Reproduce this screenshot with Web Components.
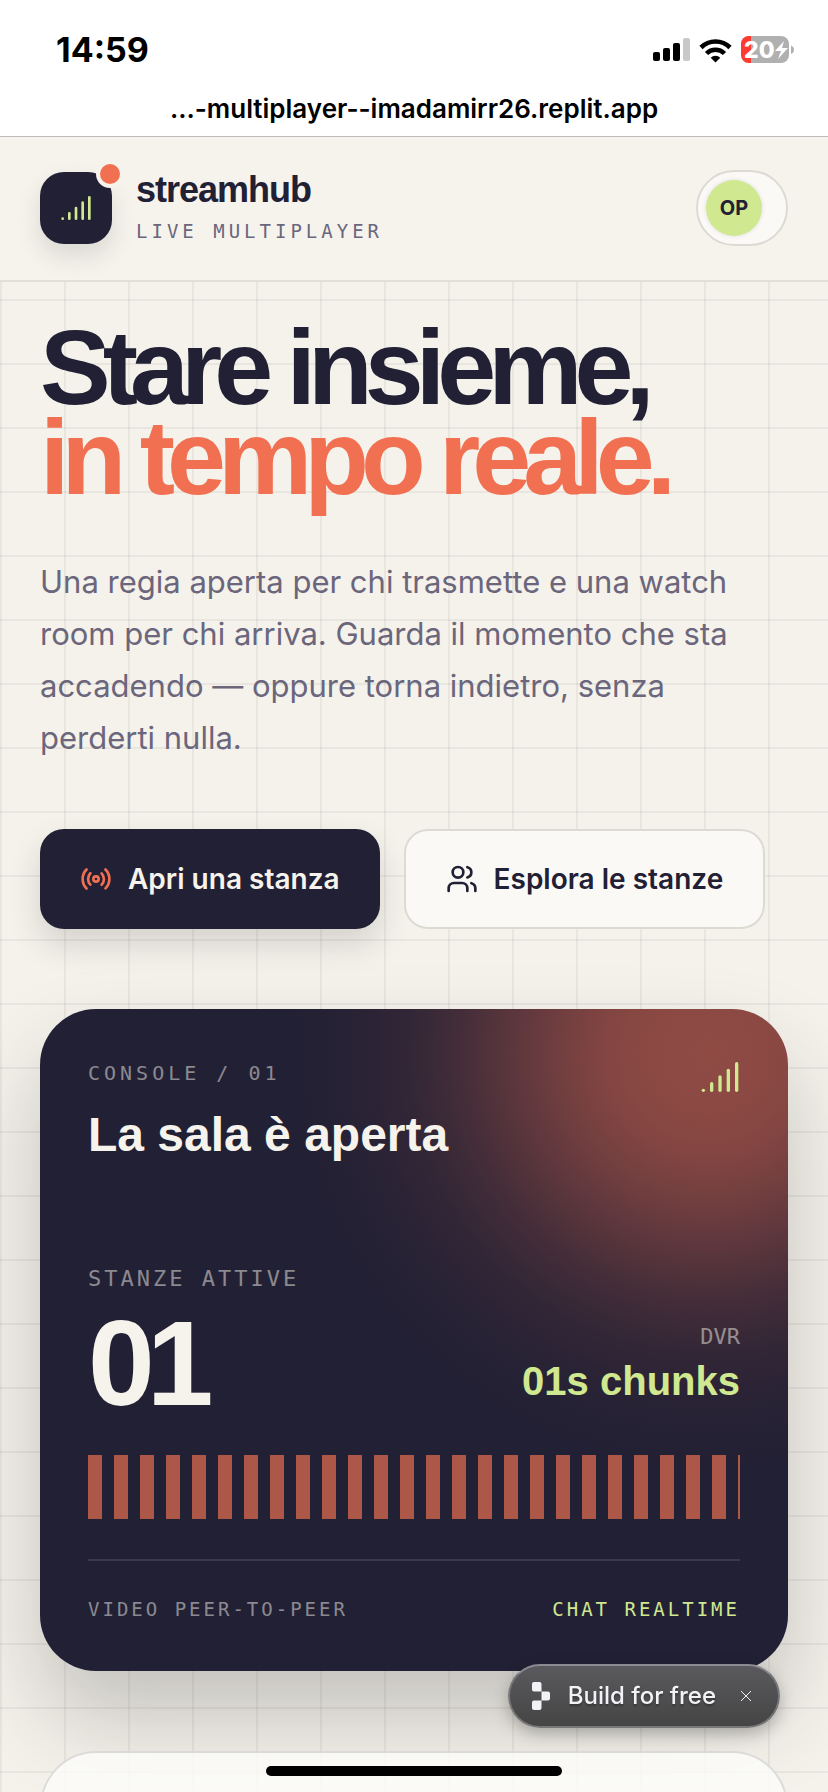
<!DOCTYPE html>
<html lang="it">
<head>
<meta charset="utf-8">
<meta name="viewport" content="width=device-width, initial-scale=1">
<title>streamhub</title>
<style>
  :root {
    --ink: #222034;
    --paper: #f5f2eb;
    --coral: #f27052;
    --lime: #d0e88f;
    --muted: #6b667c;
    --line: #dddad4;
    --display: "Liberation Sans", Arial, sans-serif;
    --body: Inter, sans-serif;
    --mono: "DejaVu Sans Mono", monospace;
  }

  body {
    margin: 0;
    height: 100vh;
    overflow: hidden;
    display: flex;
    flex-direction: column;
    background: var(--paper);
    color: var(--ink);
    font-family: var(--body);
  }
</style>
</head>
<body>
  <phone-chrome time="14:59" battery="20">...-multiplayer--imadamirr26.replit.app</phone-chrome>
  <app-header initials="OP">
    streamhub
    <span slot="tagline">LIVE MULTIPLAYER</span>
  </app-header>
  <grid-page>
    <hero-intro>
      <span slot="first">Stare insieme,</span>
      <span slot="second">in tempo reale.</span>
      <span slot="text">Una regia aperta per chi trasmette e una watch room per chi arriva. Guarda il momento che sta accadendo — oppure torna indietro, senza perderti nulla.</span>
      <action-button slot="actions" icon="radio" variant="solid">Apri una stanza</action-button>
      <action-button slot="actions" icon="users">Esplora le stanze</action-button>
    </hero-intro>
    <room-console>
      <span slot="label">CONSOLE / 01</span>
      <span slot="title">La sala è aperta</span>
      <span slot="rooms-label">STANZE ATTIVE</span>
      <span slot="rooms">01</span>
      <span slot="dvr-label">DVR</span>
      <span slot="dvr">01s chunks</span>
      <span slot="video">VIDEO PEER-TO-PEER</span>
      <span slot="chat">CHAT REALTIME</span>
    </room-console>
    <blank-card></blank-card>
  </grid-page>
  <build-badge>Build for free</build-badge>
  <home-indicator></home-indicator>

<script>
const ICONS = {
  signal: `
    <path d="M2 20h.01"/>
    <path d="M7 20v-4"/>
    <path d="M12 20v-8"/>
    <path d="M17 20V8"/>
    <path d="M22 4v16"/>
  `,
  radio: `
    <path d="M4.9 19.1C1 15.2 1 8.8 4.9 4.9"/>
    <path d="M7.8 16.2c-2.3-2.3-2.3-6.1 0-8.5"/>
    <circle cx="12" cy="12" r="2"/>
    <path d="M16.2 7.8c2.3 2.3 2.3 6.1 0 8.5"/>
    <path d="M19.1 4.9C23 8.8 23 15.1 19.1 19"/>
  `,
  users: `
    <path d="M16 21v-2a4 4 0 0 0-4-4H6a4 4 0 0 0-4 4v2"/>
    <circle cx="9" cy="7" r="4"/>
    <path d="M22 21v-2a4 4 0 0 0-3-3.87"/>
    <path d="M16 3.13a4 4 0 0 1 0 7.75"/>
  `
};

class LineIcon extends HTMLElement {
  constructor() {
    super();
    this.attachShadow({ mode: "open" });
  }

  connectedCallback() {
    this.shadowRoot.innerHTML = `
      <style>
        :host {
          display: block;
          flex: none;
          width: 32px;
          height: 32px;
        }

        svg {
          display: block;
          width: 100%;
          height: 100%;
          fill: none;
          stroke: currentColor;
          stroke-width: 2;
          stroke-linecap: round;
          stroke-linejoin: round;
        }
      </style>
      <svg viewBox="0 0 24 24" aria-hidden="true">${ICONS[this.getAttribute("name")]}</svg>
    `;
  }
}

class PhoneChrome extends HTMLElement {
  constructor() {
    super();
    this.attachShadow({ mode: "open" });
  }

  connectedCallback() {
    this.shadowRoot.innerHTML = `
      <style>
        :host {
          display: block;
          flex: none;
          background: #fff;
          border-bottom: 1px solid #bcbcbc;
          color: #000;
        }

        #status {
          display: flex;
          align-items: center;
          justify-content: space-between;
          height: 28px;
          padding: 36px 33px 20px 56px;
        }

        #time {
          font-size: 34px;
          font-weight: 700;
          line-height: 28px;
        }

        #icons {
          display: flex;
          align-items: center;
          gap: 9px;
        }

        #icons svg {
          display: block;
        }

        #battery text {
          font: 800 23px Inter, sans-serif;
          fill: #fff;
        }

        #url {
          font-size: 26px;
          font-weight: 600;
          line-height: 32px;
          padding: 9px 24px 11px;
          text-align: center;
        }
      </style>
      <div id="status">
        <span id="time">${this.getAttribute("time")}</span>
        <div id="icons">
          <svg width="37" height="24" viewBox="0 0 37 24" aria-hidden="true">
            <rect y="14" width="7" height="9" rx="2"/>
            <rect x="10" y="10" width="7" height="13" rx="2"/>
            <rect x="20" y="5" width="7" height="18" rx="2"/>
            <rect x="30" width="7" height="23" rx="2" fill="#c8c8c8"/>
          </svg>
          <svg width="33" height="25" viewBox="0 0 33 25" aria-hidden="true">
            <path d="M2 9.500a20.500 20.500 0 0 1 29 0M7.500 15.500a12.700 12.700 0 0 1 18 0" fill="none" stroke="#000" stroke-width="4.600"/>
            <path d="M16.500 24.500l-4.800-4.800a6.800 6.800 0 0 1 9.600 0z"/>
          </svg>
          <svg id="battery" width="54" height="28" viewBox="0 0 54 28" aria-hidden="true">
            <clipPath id="shell"><rect width="48" height="27" rx="8"/></clipPath>
            <g clip-path="url(#shell)">
              <rect width="48" height="27" fill="#b0b0b0"/>
              <rect width="10" height="27" fill="#ff3b30"/>
            </g>
            <path d="M50 9.500c4 1.500 4 7 0 8.500z" fill="#b0b0b0"/>
            <text x="3" y="22">${this.getAttribute("battery")}</text>
            <path d="M43 5L34 15h6l-3 8 10-11h-6z" fill="#fff"/>
          </svg>
        </div>
      </div>
      <div id="url"><slot></slot></div>
    `;
  }
}

class AppHeader extends HTMLElement {
  constructor() {
    super();
    this.attachShadow({ mode: "open" });
  }

  connectedCallback() {
    this.shadowRoot.innerHTML = `
      <style>
        :host {
          display: block;
          flex: none;
          background: #f6f3ec;
          border-bottom: 2px solid #e2dfd8;
        }

        header {
          display: flex;
          align-items: center;
          gap: 24px;
          padding: 33px 40px 34px;
        }

        #logo {
          position: relative;
          display: flex;
          align-items: center;
          justify-content: center;
          width: 72px;
          height: 72px;
          border-radius: 24px;
          background: var(--ink);
          color: var(--lime);
          box-shadow: 0 12px 24px rgba(34, 34, 40, 0.12);
        }

        #logo::after {
          content: "";
          position: absolute;
          top: -12px;
          right: -12px;
          width: 20px;
          height: 20px;
          border: 4px solid #f6f3ec;
          border-radius: 50%;
          background: var(--coral);
        }

        #name {
          flex: 1;
        }

        #brand {
          font: 700 36px/38px var(--display);
          letter-spacing: -1px;
        }

        #tagline {
          margin-top: 8px;
          color: var(--muted);
          font: 19px/28px var(--mono);
          letter-spacing: 4px;
        }

        button {
          box-sizing: border-box;
          width: 92px;
          height: 76px;
          padding: 0 8px;
          border: 2px solid var(--line);
          border-radius: 38px;
          background: #faf9f6;
          color: var(--ink);
        }

        #avatar {
          display: flex;
          align-items: center;
          justify-content: center;
          width: 56px;
          height: 56px;
          border-radius: 50%;
          background: var(--lime);
          box-shadow: 0 0 4px rgba(34, 32, 52, 0.12);
          font: 700 20px/24px var(--body);
        }
      </style>
      <header>
        <div id="logo"><line-icon name="signal"></line-icon></div>
        <div id="name">
          <div id="brand"><slot></slot></div>
          <div id="tagline"><slot name="tagline"></slot></div>
        </div>
        <button type="button"><span id="avatar">${this.getAttribute("initials")}</span></button>
      </header>
    `;
  }
}

class GridPage extends HTMLElement {
  constructor() {
    super();
    this.attachShadow({ mode: "open" });
    this.shadowRoot.innerHTML = `
      <style>
        :host {
          display: block;
          flex: 1;
          min-height: 0;
          overflow: hidden;
          background:
            linear-gradient(rgba(34, 32, 52, 0.06) 2px, transparent 2px) 0 17px / 64px 64px,
            linear-gradient(90deg, rgba(34, 32, 52, 0.06) 2px, transparent 2px) 0 0 / 64px 64px,
            var(--paper);
        }

        main {
          display: flex;
          flex-direction: column;
          padding: 40px 40px 0;
        }
      </style>
      <main><slot></slot></main>
    `;
  }
}

class HeroIntro extends HTMLElement {
  constructor() {
    super();
    this.attachShadow({ mode: "open" });
    this.shadowRoot.innerHTML = `
      <style>
        :host {
          display: block;
        }

        h1 {
          margin: 0;
          font: 700 106px/90px var(--display);
          letter-spacing: -8px;
        }

        h1 span {
          display: block;
        }

        #second {
          color: var(--coral);
        }

        p {
          max-width: 720px;
          margin: 54px 0 0;
          color: var(--muted);
          font-size: 31px;
          line-height: 52px;
        }

        #actions {
          display: flex;
          gap: 24px;
          margin-top: 65px;
        }
      </style>
      <h1>
        <span><slot name="first"></slot></span>
        <span id="second"><slot name="second"></slot></span>
      </h1>
      <p><slot name="text"></slot></p>
      <div id="actions"><slot name="actions"></slot></div>
    `;
  }
}

class ActionButton extends HTMLElement {
  constructor() {
    super();
    this.attachShadow({ mode: "open" });
  }

  connectedCallback() {
    this.shadowRoot.innerHTML = `
      <style>
        :host {
          display: block;
        }

        button {
          display: flex;
          align-items: center;
          gap: 16px;
          height: 100px;
          padding: 0 40px;
          border: 2px solid var(--line);
          border-radius: 24px;
          background: #faf9f6;
          color: var(--ink);
          font: 600 28px/36px var(--body);
          white-space: nowrap;
        }

        :host([variant="solid"]) button {
          border: 0;
          background: var(--ink);
          color: #f6f3ec;
          box-shadow: 0 16px 32px rgba(34, 34, 40, 0.15);
        }

        :host([variant="solid"]) line-icon {
          color: var(--coral);
        }
      </style>
      <button type="button">
        <line-icon name="${this.getAttribute("icon")}"></line-icon>
        <slot></slot>
      </button>
    `;
  }
}

class RoomConsole extends HTMLElement {
  constructor() {
    super();
    this.attachShadow({ mode: "open" });
    this.shadowRoot.innerHTML = `
      <style>
        :host {
          display: block;
          margin-top: 80px;
          padding: 48px;
          border-radius: 56px;
          background:
            radial-gradient(
              circle at calc(100% - 80px) 44px,
              rgba(242, 112, 82, 0.52) 0,
              rgba(242, 112, 82, 0.51) 60px,
              rgba(242, 112, 82, 0.47) 100px,
              rgba(242, 112, 82, 0.38) 150px,
              rgba(242, 112, 82, 0.27) 200px,
              rgba(242, 112, 82, 0.16) 250px,
              rgba(242, 112, 82, 0.08) 300px,
              rgba(242, 112, 82, 0.03) 350px,
              rgba(242, 112, 82, 0) 420px
            ),
            var(--ink);
          box-shadow: 0 48px 90px rgba(34, 34, 40, 0.23);
          color: #f6f3ec;
        }

        #top,
        #numbers,
        footer {
          display: flex;
          justify-content: space-between;
        }

        .label {
          color: rgba(246, 243, 236, 0.5);
          font: 20px/32px var(--mono);
          letter-spacing: 4px;
        }

        h2 {
          margin: 18px 0 0;
          font: 700 48px/56px var(--display);
        }

        line-icon {
          width: 40px;
          height: 40px;
          color: var(--lime);
        }

        #numbers {
          align-items: flex-end;
          margin-top: 100px;
        }

        #numbers .label {
          font-size: 22px;
          letter-spacing: 3px;
        }

        #rooms {
          margin-top: 8px;
          font: 700 120px/120px var(--display);
          letter-spacing: -8px;
        }

        #dvr {
          padding-bottom: 18px;
          text-align: right;
        }

        #dvr .label {
          letter-spacing: normal;
        }

        #chunks {
          margin-top: 4px;
          color: var(--lime);
          font: 700 40px/48px var(--display);
        }

        #bars {
          height: 64px;
          margin-top: 32px;
          background: repeating-linear-gradient(90deg, #ad5748 0 14px, transparent 14px 26px);
        }

        footer {
          margin-top: 40px;
          padding-top: 34px;
          border-top: 2px solid #3b394b;
          color: rgba(246, 243, 236, 0.5);
          font: 19px/28px var(--mono);
          letter-spacing: 3px;
        }

        #chat {
          color: var(--lime);
        }
      </style>
      <div id="top">
        <div>
          <div class="label"><slot name="label"></slot></div>
          <h2><slot name="title"></slot></h2>
        </div>
        <line-icon name="signal"></line-icon>
      </div>
      <div id="numbers">
        <div>
          <div class="label"><slot name="rooms-label"></slot></div>
          <div id="rooms"><slot name="rooms"></slot></div>
        </div>
        <div id="dvr">
          <div class="label"><slot name="dvr-label"></slot></div>
          <div id="chunks"><slot name="dvr"></slot></div>
        </div>
      </div>
      <div id="bars"></div>
      <footer>
        <slot name="video"></slot>
        <span id="chat"><slot name="chat"></slot></span>
      </footer>
    `;
  }
}

class BlankCard extends HTMLElement {
  constructor() {
    super();
    this.attachShadow({ mode: "open" });
    this.shadowRoot.innerHTML = `
      <style>
        :host {
          display: block;
          min-height: 240px;
          margin-top: 80px;
          border: 2px solid rgba(34, 32, 52, 0.14);
          border-radius: 56px;
          background: rgba(253, 253, 250, 0.8);
        }
      </style>
      <slot></slot>
    `;
  }
}

class BuildBadge extends HTMLElement {
  constructor() {
    super();
    this.attachShadow({ mode: "open" });
    this.shadowRoot.innerHTML = `
      <style>
        :host {
          position: fixed;
          right: 48px;
          bottom: 64px;
          display: flex;
          align-items: center;
          height: 60px;
          padding: 0 22px;
          border: 2px solid #77777a;
          border-top-color: #8b8a92;
          border-radius: 32px;
          background: linear-gradient(#5a595d, #454545);
          box-shadow: 0 6px 16px rgba(0, 0, 0, 0.25);
          color: #f2f2f6;
        }

        a {
          display: flex;
          align-items: center;
          gap: 18px;
          color: inherit;
          font: 500 24px/32px Inter, sans-serif;
          text-decoration: none;
          text-shadow: 0 2px 2px rgba(0, 0, 0, 0.3);
        }

        button {
          display: flex;
          margin-left: 20px;
          padding: 4px;
          border: 0;
          background: none;
          color: inherit;
        }
      </style>
      <a href="#">
        <svg width="18" height="28" viewBox="0 0 18 28" fill="currentColor" aria-hidden="true">
          <path d="M2 0h5.500a2 2 0 0 1 2 2v7.500H2a2 2 0 0 1-2-2V2a2 2 0 0 1 2-2zM9.500 9.500H16a2 2 0 0 1 2 2v5a2 2 0 0 1-2 2H9.500zM2 18.500h7.500V26a2 2 0 0 1-2 2H2a2 2 0 0 1-2-2v-5.500a2 2 0 0 1 2-2z"/>
        </svg>
        <slot></slot>
      </a>
      <button type="button" aria-label="Chiudi">
        <svg width="12" height="12" viewBox="0 0 12 12" aria-hidden="true">
          <path d="M1 1l10 10M11 1L1 11" stroke="currentColor"/>
        </svg>
      </button>
    `;
  }
}

class HomeIndicator extends HTMLElement {
  constructor() {
    super();
    this.attachShadow({ mode: "open" });
    this.shadowRoot.innerHTML = `
      <style>
        :host {
          position: fixed;
          bottom: 16px;
          left: 50%;
          width: 296px;
          height: 10px;
          margin-left: -148px;
          border-radius: 5px;
          background: #000;
        }
      </style>
    `;
  }
}

customElements.define("line-icon", LineIcon);
customElements.define("phone-chrome", PhoneChrome);
customElements.define("app-header", AppHeader);
customElements.define("grid-page", GridPage);
customElements.define("hero-intro", HeroIntro);
customElements.define("action-button", ActionButton);
customElements.define("room-console", RoomConsole);
customElements.define("blank-card", BlankCard);
customElements.define("build-badge", BuildBadge);
customElements.define("home-indicator", HomeIndicator);
</script>
</body>
</html>
